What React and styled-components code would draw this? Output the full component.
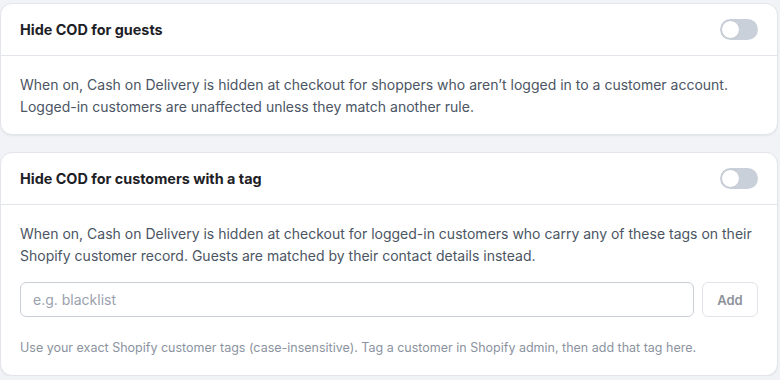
import React from 'react';
import styled, { createGlobalStyle } from 'styled-components';

const GlobalStyle = createGlobalStyle`
  body {
    margin: 0;
    background: #f1f3f6;
    font-family: Inter, "Noto Sans", sans-serif;
  }
`;

const Page = styled.div`
  display: flex;
  flex-direction: column;
  gap: 17px;
  padding: 3px 2px 0 0;
`;

const Card = styled.section`
  background: #fff;
  border: 1px solid #e2e5ea;
  border-radius: 12px;
  box-shadow: 0 1px 2px rgba(16, 24, 40, 0.06);
`;

const CardHeader = styled.header`
  display: flex;
  align-items: center;
  justify-content: space-between;
  height: 51px;
  padding: 0 19px;
  border-bottom: 1px solid #e2e5ea;
`;

const Title = styled.h2`
  margin: 0;
  font-size: 14.4px;
  font-weight: 700;
  color: #1d2126;
`;

const Toggle = styled.span`
  position: relative;
  display: inline-block;
  width: 38px;
  height: 21px;
  border-radius: 11px;
  background: #cad0d9;

  &::after {
    content: '';
    position: absolute;
    left: 1px;
    top: 1px;
    width: 17px;
    height: 17px;
    border-radius: 50%;
    background: #fff;
    border: 1px solid #c2c9d3;
  }
`;

const CardBody = styled.div`
  padding: 18px 19px 16px;
  display: flex;
  flex-direction: column;
`;

const Text = styled.p`
  margin: 0;
  font-size: 14px;
  line-height: 22px;
  color: #4b5563;
`;

const InputRow = styled.div`
  display: flex;
  gap: 8px;
  margin-top: 15px;
`;

const Input = styled.input`
  flex: 1;
  height: 35px;
  box-sizing: border-box;
  border: 1px solid #c9ced7;
  border-radius: 6px;
  padding: 0 12px;
  font-family: inherit;
  font-size: 14px;
  color: #1d2126;
  outline: none;

  &::placeholder {
    color: #9aa1ad;
  }
`;

const Button = styled.button`
  width: 56px;
  height: 35px;
  box-sizing: border-box;
  border: 1px solid #e0e3e8;
  border-radius: 6px;
  background: #fff;
  font-family: inherit;
  font-size: 13px;
  font-weight: 600;
  color: #8d929a;
`;

const Helper = styled.p`
  margin: 22px 0 2px;
  font-size: 12.5px;
  line-height: 18px;
  color: #8b93a0;
`;

export default function App() {
  return (
    <>
      <GlobalStyle />
      <Page>
        <Card>
          <CardHeader>
            <Title>Hide COD for guests</Title>
            <Toggle />
          </CardHeader>
          <CardBody>
            <Text>
              When on, Cash on Delivery is hidden at checkout for shoppers who aren’t logged in to a customer account.
              Logged-in customers are unaffected unless they match another rule.
            </Text>
          </CardBody>
        </Card>
        <Card>
          <CardHeader>
            <Title>Hide COD for customers with a tag</Title>
            <Toggle />
          </CardHeader>
          <CardBody>
            <Text>
              When on, Cash on Delivery is hidden at checkout for logged-in customers who carry any of these tags on their
              Shopify customer record. Guests are matched by their contact details instead.
            </Text>
            <InputRow>
              <Input placeholder="e.g. blacklist" />
              <Button>Add</Button>
            </InputRow>
            <Helper>
              Use your exact Shopify customer tags (case-insensitive). Tag a customer in Shopify admin, then add that tag here.
            </Helper>
          </CardBody>
        </Card>
      </Page>
    </>
  );
}
